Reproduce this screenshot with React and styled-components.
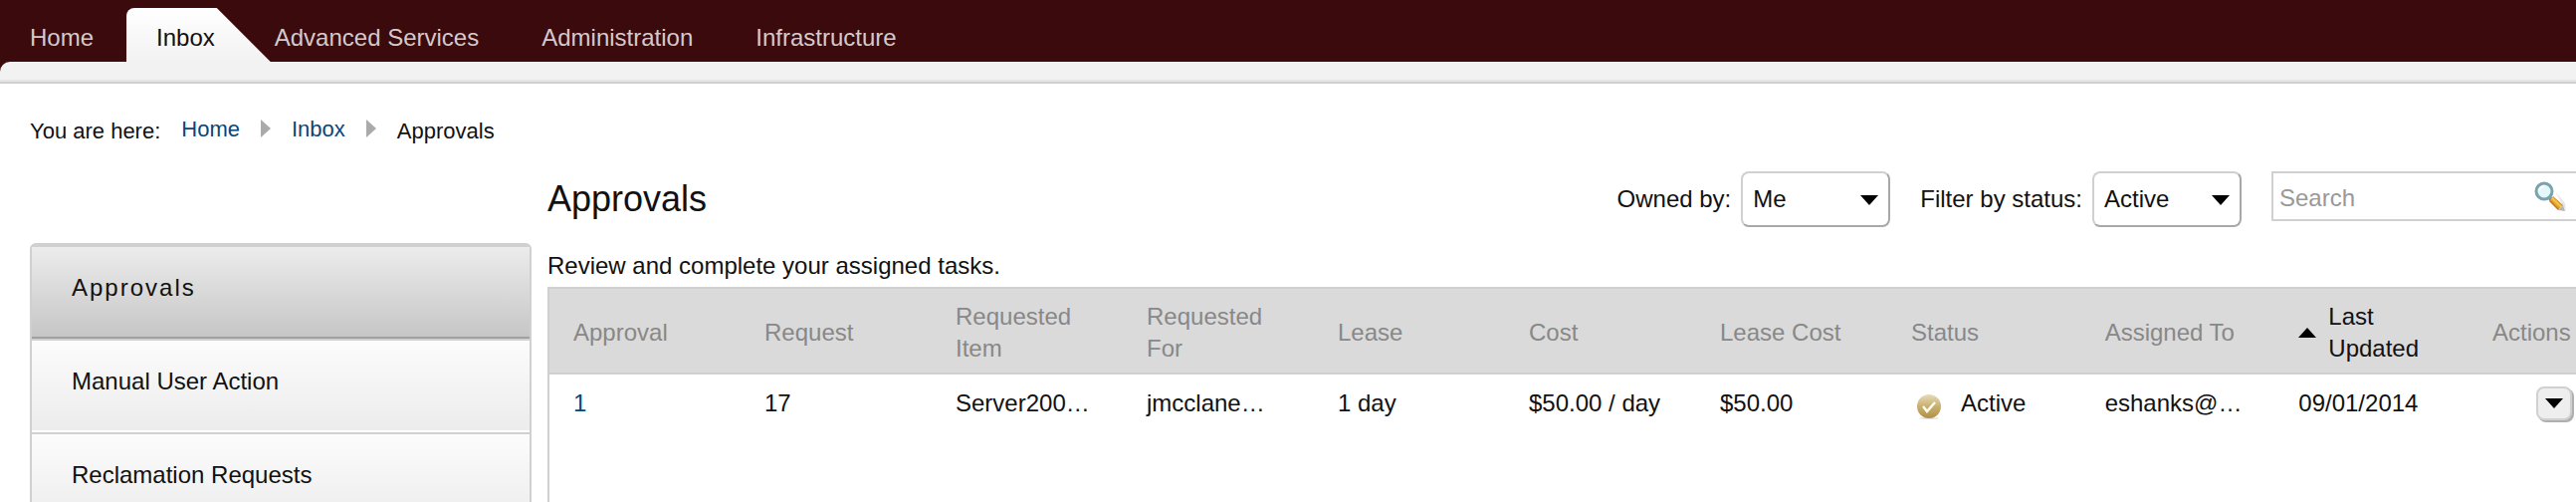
import React, { useState } from "react";
import styled, { createGlobalStyle } from "styled-components";

const tabs = ["Home", "Inbox", "Advanced Services", "Administration", "Infrastructure"];

const menus = ["Approvals", "Manual User Action", "Reclamation Requests"];

const columns = [
    { title: "Approval", width: 192 },
    { title: "Request", width: 192 },
    { title: "Requested Item", width: 192 },
    { title: "Requested For", width: 192 },
    { title: "Lease", width: 192 },
    { title: "Cost", width: 192 },
    { title: "Lease Cost", width: 192 },
    { title: "Status" },
    { title: "Assigned To" },
    { title: "Last Updated", sorted: true },
    { title: "Actions", width: 108 },
];

const approvals = [
    {
        id: 1,
        request: "17",
        item: "Server200…",
        requestedFor: "jmcclane…",
        lease: "1 day",
        cost: "$50.00 / day",
        leaseCost: "$50.00",
        status: "Active",
        assignedTo: "eshanks@…",
        updated: "09/01/2014",
    },
];

function Triangle({ up }) {
    return (
        <svg width="18" height="10" viewBox="0 0 18 10" aria-hidden="true">
            <path d={up ? "M0 10L9 0L18 10Z" : "M0 0H18L9 10Z"} fill="#000" />
        </svg>
    );
}

function Crumb() {
    return (
        <CrumbArrow width="10" height="18" viewBox="0 0 10 18" aria-hidden="true">
            <path d="M0 0L10 9L0 18Z" fill="#aaa" />
        </CrumbArrow>
    );
}

function CheckIcon() {
    return (
        <svg width="32" height="32" viewBox="0 0 32 32" aria-hidden="true">
            <defs>
                <linearGradient id="gold" x1="0" y1="0" x2="0" y2="1">
                    <stop offset="0" stopColor="#e6dcb8" />
                    <stop offset="0.5" stopColor="#c9b070" />
                    <stop offset="1" stopColor="#b08f45" />
                </linearGradient>
            </defs>
            <ellipse cx="18" cy="31" rx="10" ry="1" fill="#e4e4e4" />
            <circle cx="18" cy="19" r="12" fill="url(#gold)" />
            <path d="M12 19L16 24L24 15" fill="none" stroke="#fffdf0" strokeWidth="2.5" />
        </svg>
    );
}

function SearchIcon() {
    return (
        <svg width="32" height="32" viewBox="0 0 32 32" aria-hidden="true">
            <defs>
                <linearGradient id="handle" x1="1" y1="0" x2="0" y2="1">
                    <stop offset="0.25" stopColor="#8a5a1c" />
                    <stop offset="0.45" stopColor="#ffc94d" />
                    <stop offset="0.6" stopColor="#d98f1c" />
                    <stop offset="0.8" stopColor="#5f3810" />
                </linearGradient>
            </defs>
            <path d="M21 10L31 22L32 30Z" fill="#e6e6e6" />
            <path d="M14 15L18 19" stroke="#7f8f96" strokeWidth="4" />
            <path d="M19 15L29 24L24 29L15 20Z" fill="url(#handle)" />
            <path d="M29 24L31 30L24 29Z" fill="#b5b5b5" />
            <circle cx="10" cy="10" r="8" fill="#e4f7fb" stroke="#7ba3ae" strokeWidth="3" />
            <path d="M5 10A5 5 0 0 1 10 5" fill="none" stroke="#fff" strokeWidth="2" />
        </svg>
    );
}

function App() {
    const [owner, setOwner] = useState("Me");
    const [status, setStatus] = useState("Active");
    const [keyword, setKeyword] = useState("");

    return (
        <Page>
            <GlobalStyle />
            <Header>
                <Nav>
                    {tabs.map((tab) => (
                        <Tab key={tab} href="#" $active={tab === "Inbox"}>{tab}</Tab>
                    ))}
                </Nav>
                <SubBar />
            </Header>
            <Breadcrumb aria-label="Breadcrumb">
                <CrumbLabel>You are here:</CrumbLabel>
                <CrumbLink href="#">Home</CrumbLink>
                <Crumb />
                <CrumbLink href="#">Inbox</CrumbLink>
                <Crumb />
                <CrumbLabel>Approvals</CrumbLabel>
            </Breadcrumb>
            <Content>
                <Sidebar>
                    {menus.map((menu) => (
                        <MenuItem key={menu} href="#" $active={menu === "Approvals"}>{menu}</MenuItem>
                    ))}
                </Sidebar>
                <Main>
                    <Toolbar>
                        <Title>Approvals</Title>
                        <Filter>
                            <label htmlFor="owner">Owned by:</label>
                            <SelectBox>
                                <Select id="owner" value={owner} onChange={(e) => setOwner(e.target.value)}>
                                    <option>Me</option>
                                    <option>My groups</option>
                                </Select>
                                <SelectArrow><Triangle /></SelectArrow>
                            </SelectBox>
                        </Filter>
                        <Filter>
                            <label htmlFor="status">Filter by status:</label>
                            <SelectBox>
                                <Select id="status" value={status} onChange={(e) => setStatus(e.target.value)}>
                                    <option>Active</option>
                                    <option>Completed</option>
                                </Select>
                                <SelectArrow><Triangle /></SelectArrow>
                            </SelectBox>
                        </Filter>
                        <SearchBox>
                            <SearchInput
                                aria-label="Search"
                                placeholder="Search"
                                value={keyword}
                                onChange={(e) => setKeyword(e.target.value)}
                            />
                            <SearchButton aria-label="Run search"><SearchIcon /></SearchButton>
                        </SearchBox>
                    </Toolbar>
                    <Description>Review and complete your assigned tasks.</Description>
                    <TableWrapper>
                        <Table>
                            <thead>
                                <tr>
                                    {columns.map((col) => (
                                        <Th key={col.title} $width={col.width} $sorted={col.sorted}>
                                            {col.sorted ? (
                                                <SortedTitle><Triangle up />{col.title}</SortedTitle>
                                            ) : (
                                                col.title
                                            )}
                                        </Th>
                                    ))}
                                </tr>
                            </thead>
                            <tbody>
                                {approvals.map((row) => (
                                    <tr key={row.id}>
                                        <Td><RowLink href="#">{row.id}</RowLink></Td>
                                        <Td>{row.request}</Td>
                                        <Td>{row.item}</Td>
                                        <Td>{row.requestedFor}</Td>
                                        <Td>{row.lease}</Td>
                                        <Td>{row.cost}</Td>
                                        <Td>{row.leaseCost}</Td>
                                        <Td><Status><CheckIcon />{row.status}</Status></Td>
                                        <Td>{row.assignedTo}</Td>
                                        <Td>{row.updated}</Td>
                                        <ActionTd>
                                            <ActionButton aria-label="Actions"><Triangle /></ActionButton>
                                        </ActionTd>
                                    </tr>
                                ))}
                            </tbody>
                        </Table>
                    </TableWrapper>
                </Main>
            </Content>
        </Page>
    );
}

export default App;

const GlobalStyle = createGlobalStyle`
  * {
    box-sizing: border-box;
  }
  body {
    margin: 0;
    background: #fff;
    color: #111;
    font-family: "Liberation Sans", Arial, sans-serif;
    font-size: 24px;
    line-height: 32px;
  }
  svg {
    display: block;
    flex: none;
  }
  a {
    text-decoration: none;
  }
`

const Page = styled.div`
  display: flex;
  flex-direction: column;
  height: 100vh;
  overflow: hidden;
`

const Header = styled.header`
  flex: none;
  background: #3a0a0c;
`

const Nav = styled.nav`
  display: flex;
  padding-top: 8px;
`

const Tab = styled.a`
  height: 54px;
  padding: ${({ $active }) => ($active ? "4px 56px 0 30px" : "4px 33px 0 30px")};
  margin-right: ${({ $active }) => ($active ? "-26px" : "0")};
  line-height: 52px;
  white-space: nowrap;
  color: ${({ $active }) => ($active ? "#111" : "#d6c9ca")};
  background: ${({ $active }) => ($active ? "linear-gradient(#fff, #f2f2f2)" : "none")};
  border-top-left-radius: 8px;
  clip-path: ${({ $active }) =>
    $active ? "polygon(0 0, calc(100% - 54px) 0, 100% 100%, 0 100%)" : "none"};
`

const SubBar = styled.div`
  height: 22px;
  background: #f2f2f2;
  border-bottom: 2px solid #d0d0d0;
  border-top-left-radius: 10px;
  box-shadow: inset 0 -2px #e6e6e6;
`

const Breadcrumb = styled.nav`
  display: flex;
  flex: none;
  align-items: flex-start;
  gap: 21px;
  padding: 32px 30px 24px;
  font-size: 22px;
`

const CrumbLabel = styled.span``

const CrumbLink = styled.a`
  line-height: 28px;
  color: #0a4678;
`

const CrumbArrow = styled.svg`
  margin-top: 4px;
`

const Content = styled.div`
  display: flex;
  flex: 1;
  gap: 16px;
  padding-left: 30px;
  min-height: 0;
`

const Sidebar = styled.nav`
  flex: none;
  align-self: flex-start;
  width: 504px;
  margin-top: 72px;
  border: 2px solid #d0d0d0;
  border-radius: 6px;
`

const MenuItem = styled.a`
  display: block;
  height: 94px;
  padding: 25px 40px;
  color: #111;
  border-top: 2px solid #d0d0d0;
  border-bottom: 2px solid ${({ $active }) => ($active ? "#a0a0a0" : "#fff")};
  background: ${({ $active }) =>
    $active ? "linear-gradient(#ececec, #c6c6c6)" : "linear-gradient(#fcfcfc, #ececec)"};
  letter-spacing: ${({ $active }) => ($active ? "2px" : "normal")};
`

const Main = styled.main`
  display: flex;
  flex: 1;
  flex-direction: column;
  min-width: 0;
`

const Toolbar = styled.div`
  display: flex;
  gap: 30px;
`

const Title = styled.h1`
  flex: 1;
  margin: 0;
  font-size: 36px;
  font-weight: normal;
  line-height: 56px;
`

const Filter = styled.div`
  display: flex;
  align-items: center;
  gap: 10px;
  height: 56px;
  white-space: nowrap;
`

const SelectBox = styled.div`
  position: relative;
`

const Select = styled.select`
  display: block;
  appearance: none;
  width: 150px;
  height: 56px;
  padding: 0 36px 0 10px;
  border: 2px solid #d0d0d0;
  border-right-color: #a8a8a8;
  border-bottom-color: #a8a8a8;
  border-radius: 8px;
  background: #fff;
  color: #111;
  font: inherit;
`

const SelectArrow = styled.span`
  position: absolute;
  top: 24px;
  right: 12px;
  pointer-events: none;
`

const SearchBox = styled.div`
  display: flex;
  align-items: flex-start;
  width: 306px;
  height: 50px;
  border: 2px solid #d0d0d0;
  border-right: none;
`

const SearchInput = styled.input`
  flex: 1;
  min-width: 0;
  height: 46px;
  padding: 4px 6px 0;
  border: none;
  outline: none;
  background: none;
  color: #111;
  font: inherit;

  &::placeholder {
    color: #999;
    opacity: 1;
  }
`

const SearchButton = styled.button`
  padding: 8px 10px 0 0;
  border: none;
  background: none;
`

const Description = styled.p`
  margin: 23px 0 5px;
`

const TableWrapper = styled.div`
  flex: 1;
  border-top: 2px solid #d0d0d0;
  border-left: 2px solid #d0d0d0;
`

const Table = styled.table`
  width: 100%;
  table-layout: fixed;
  border-collapse: separate;
  border-spacing: 0;
`

const Th = styled.th`
  width: ${({ $width }) => ($width ? $width + "px" : "auto")};
  height: 86px;
  padding: 12px 20px 8px 24px;
  border-bottom: 2px solid #d0d0d0;
  background: #dadada;
  color: ${({ $sorted }) => ($sorted ? "#111" : "#888")};
  font-weight: normal;
  text-align: left;

  &:last-child {
    padding-right: 0;
  }
`

const SortedTitle = styled.div`
  display: flex;
  align-items: center;
  gap: 12px;
  width: 130px;
`

const Td = styled.td`
  padding: 12px 0 12px 24px;
  white-space: nowrap;
`

const RowLink = styled.a`
  color: #0a4678;
`

const Status = styled.div`
  display: flex;
  align-items: center;
  gap: 18px;
`

const ActionTd = styled(Td)`
  padding-right: 4px;
`

const ActionButton = styled.button`
  display: flex;
  align-items: center;
  justify-content: center;
  width: 36px;
  height: 34px;
  margin-left: auto;
  padding: 0;
  border: 2px solid #d0d0d0;
  border-radius: 8px;
  background: #eee;
  box-shadow: 2px 2px #b0b0b0;
`
